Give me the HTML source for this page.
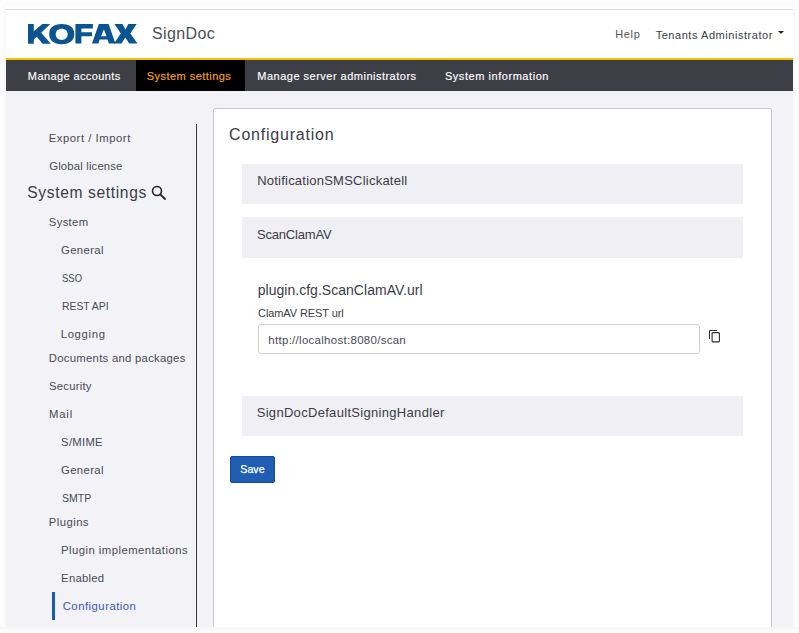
<!DOCTYPE html>
<html><head><meta charset="utf-8">
<style>
html,body{margin:0;padding:0;}
body{width:799px;height:633px;overflow:hidden;background:#fdfdfd;position:relative;font-family:"Liberation Sans",sans-serif;}
.abs{position:absolute;}
.t{position:absolute;white-space:nowrap;line-height:1;}
#app{position:absolute;left:6px;top:6px;width:787px;height:621px;background:#f2f2f7;overflow:hidden;box-shadow:0 0 6px rgba(0,0,0,0.05);}
#hdr{position:absolute;left:0;top:0;width:787px;height:52px;background:#fff;}
#hdrline{position:absolute;left:0;top:3px;width:787px;height:1px;background:#dcdce2;}
#yel{position:absolute;left:0;top:52px;width:787px;height:2px;background:#f7c100;}
#nav{position:absolute;left:0;top:54px;width:787px;height:31px;background:#3e3e47;}
#act{position:absolute;left:130px;top:0;width:109px;height:31px;background:#000;}
.nv{color:#fff;font-size:12px;}
.st{-webkit-text-stroke:0.15px currentColor;}
.sb{color:#4a4a55;font-size:12px;}
#box{position:absolute;left:207px;top:102px;width:557px;height:600px;background:#fff;border:1px solid #c8c8cc;border-radius:2px;}
.pn{position:absolute;left:235px;width:501px;background:#efeff4;}
.pt{color:#3c3c46;font-size:13px;}
</style></head><body>
<div id="app">
  <div id="hdr">
    <div id="hdrline"></div>
  </div>
  <div id="yel"></div>
  <div id="nav">
    <div id="act"></div>
  </div>
</div>
<!-- header texts (page coords) -->
<svg class="abs" style="left:0;top:0;" width="160" height="60" viewBox="0 0 160 60"><g fill="#0a5591" fill-rule="evenodd">
<path d="M28,24H33.8V31.2L42.3,24H50.2L41.2,32.8L50.8,43.8H42.5L36.9,36.7L33.8,39.2V43.8H28Z"/>
<path d="M61.75,24.00C69.78,24.00 74.30,27.64 74.30,34.10C74.30,40.56 69.78,44.20 61.75,44.20C53.72,44.20 49.20,40.56 49.20,34.10C49.20,27.64 53.72,24.00 61.75,24.00ZM61.70,28.70C65.30,28.70 67.70,30.96 67.70,34.35C67.70,37.74 65.30,40.00 61.70,40.00C58.10,40.00 55.70,37.74 55.70,34.35C55.70,30.96 58.10,28.70 61.70,28.70Z"/>
<path d="M75.4,24H92.9V28.5H81.4V32.3H92V36.2H81.4V43.6H75.4Z"/>
<path d="M92,43.6L98.8,24H108.6L115.4,43.6H108.8L107.6,39.6H99.6L98.4,43.6ZM101,36.2L103.9,29.6L106.6,36.2Z"/>
<path d="M114.5,24H122.4L125.4,29.4L128.3,24H136.7L130.3,33.6L137.5,43.6H129.2L125.3,37.6L121.5,43.6H114L120.8,33.6Z"/>
</g></svg>
<div class="t" style="left: 152.11px; top: 26px; font-size: 16px; letter-spacing: 0.34px; color: rgb(78, 78, 88);">SignDoc</div>
<div class="t" style="left: 615.2px; top: 29px; font-size: 11px; color: rgb(85, 85, 85); letter-spacing: 0.68px;">Help</div>
<div class="t" style="left: 655.64px; top: 30px; font-size: 11px; letter-spacing: 0.55px; color: rgb(60, 60, 70);">Tenants Administrator</div>
<div class="abs" style="left:778px;top:31px;width:0;height:0;border-left:3.5px solid transparent;border-right:3.5px solid transparent;border-top:3.5px solid #222;"></div>

<div class="t st" style="left: 27.83px; top: 70.69px; font-size: 11px; letter-spacing: 0.40px; color: rgb(255, 255, 255);">Manage accounts</div>
<div class="t st" style="left: 146.78px; top: 70.69px; font-size: 11px; letter-spacing: 0.46px; color: rgb(245, 163, 26);">System settings</div>
<div class="t st" style="left: 257.30px; top: 70.69px; font-size: 11px; letter-spacing: 0.49px; color: rgb(255, 255, 255);">Manage server administrators</div>
<div class="t st" style="left: 444.93px; top: 70.69px; font-size: 11px; letter-spacing: 0.55px; color: rgb(255, 255, 255);">System information</div>

<!-- sidebar -->
<div class="t" style="left: 48.68px; top: 133px; font-size: 11.3px; letter-spacing: 0.54px; color: rgb(74, 74, 85);">Export / Import</div>
<div class="t" style="left: 49.24px; top: 161px; font-size: 11.3px; letter-spacing: 0.17px; color: rgb(74, 74, 85);">Global license</div>
<div class="t" style="left: 27.27px; top: 185px; font-size: 15.6px; letter-spacing: 0.64px; color: rgb(60, 60, 70);">System settings</div>
<svg class="abs" style="left:148px;top:182px;" width="22" height="22" viewBox="0 0 22 22"><circle cx="9" cy="9" r="4.5" fill="none" stroke="#222" stroke-width="1.6"/><line x1="12.3" y1="12.3" x2="17" y2="17" stroke="#222" stroke-width="1.8" stroke-linecap="round"/></svg>
<div class="t" style="left: 48.84px; top: 217px; font-size: 11.3px; letter-spacing: 0.32px; color: rgb(74, 74, 85);">System</div>
<div class="t" style="left: 60.97px; top: 245px; font-size: 11.3px; letter-spacing: 0.39px; color: rgb(74, 74, 85);">General</div>
<div class="t" style="left: 61.5px; top: 273px; font-size: 11.3px; letter-spacing: 0px; color: rgb(74, 74, 85); transform-origin: 0px 0px; transform: scaleX(0.84);">SSO</div>
<div class="t" style="left: 61.7px; top: 301px; font-size: 11.3px; letter-spacing: 0px; color: rgb(74, 74, 85); transform-origin: 0px 0px; transform: scaleX(0.92);">REST API</div>
<div class="t" style="left: 60.68px; top: 329px; font-size: 11.3px; letter-spacing: 0.69px; color: rgb(74, 74, 85);">Logging</div>
<div class="t" style="left: 48.83px; top: 353px; font-size: 11.3px; letter-spacing: 0.28px; color: rgb(74, 74, 85);">Documents and packages</div>
<div class="t" style="left: 49.12px; top: 381px; font-size: 11.3px; letter-spacing: 0.22px; color: rgb(74, 74, 85);">Security</div>
<div class="t" style="left: 49.11px; top: 409px; font-size: 11.3px; letter-spacing: 0.78px; color: rgb(74, 74, 85);">Mail</div>
<div class="t" style="left: 61.12px; top: 437px; font-size: 11.3px; letter-spacing: 0.27px; color: rgb(74, 74, 85);">S/MIME</div>
<div class="t" style="left: 60.97px; top: 465px; font-size: 11.3px; letter-spacing: 0.39px; color: rgb(74, 74, 85);">General</div>
<div class="t" style="left: 61.7px; top: 493px; font-size: 11.3px; letter-spacing: 0px; color: rgb(74, 74, 85); transform-origin: 0px 0px; transform: scaleX(0.93);">SMTP</div>
<div class="t" style="left: 48.87px; top: 517px; font-size: 11.3px; letter-spacing: 0.43px; color: rgb(74, 74, 85);">Plugins</div>
<div class="t" style="left: 61.11px; top: 545px; font-size: 11.3px; letter-spacing: 0.46px; color: rgb(74, 74, 85);">Plugin implementations</div>
<div class="t" style="left: 61.11px; top: 573px; font-size: 11.3px; letter-spacing: 0.26px; color: rgb(74, 74, 85);">Enabled</div>
<div class="abs" style="left:52px;top:592px;width:3px;height:28px;background:#1a5cb0;"></div>
<div class="t" style="left: 62.70px; top: 601px; font-size: 11.3px; letter-spacing: 0.50px; color: rgb(58, 90, 184);">Configuration</div>
<div class="abs" style="left:196px;top:124px;width:1px;height:503px;background:#3a3a44;"></div>

<!-- content -->
<div class="abs" style="left:213px;top:108px;width:557px;height:560px;background:#fff;border:1px solid #c8c8cc;border-radius:2px;"></div>
<div class="t" style="left: 229.09px; top: 127px; font-size: 16px; letter-spacing: 0.78px; color: rgb(60, 60, 70);">Configuration</div>
<div class="pn" style="left:242px;top:164px;height:40px;"></div>
<div class="t" style="left: 257.15px; top: 174.4px; font-size: 13px; letter-spacing: 0.23px; color: rgb(60, 60, 70);">NotificationSMSClickatell</div>
<div class="pn" style="left:242px;top:217px;height:41px;"></div>
<div class="t" style="left: 256.93px; top: 228.2px; font-size: 13px; letter-spacing: -0.17px; color: rgb(60, 60, 70);">ScanClamAV</div>
<div class="t" style="left: 257.68px; top: 282.95px; font-size: 14px; color: rgb(60, 60, 70); letter-spacing: 0.03px;">plugin.cfg.ScanClamAV.url</div>
<div class="t" style="left: 258.07px; top: 307.79px; font-size: 11px; letter-spacing: -0.09px; color: rgb(60, 60, 70);">ClamAV REST url</div>
<div class="abs" style="left:258px;top:324px;width:440px;height:28px;border:1px solid #ccd0d8;border-radius:3px;background:#fff;"></div>
<div class="t" style="left: 268.35px; top: 335px; font-size: 11.5px; letter-spacing: 0.28px; color: rgb(74, 74, 85);">http://localhost:8080/scan</div>
<svg class="abs" style="left:706px;top:327px;" width="18" height="18" viewBox="0 0 18 18"><path d="M3.5 12V3.5H11" fill="none" stroke="#2a2a30" stroke-width="1"/><rect x="6.1" y="5.6" width="7.3" height="9.3" rx="1" fill="none" stroke="#2a2a30" stroke-width="1.1"/></svg>
<div class="pn" style="left:242px;top:396px;height:40px;"></div>
<div class="t" style="left: 256.66px; top: 406px; font-size: 13px; letter-spacing: 0.31px; color: rgb(60, 60, 70);">SignDocDefaultSigningHandler</div>
<div class="abs" style="left:230px;top:456px;width:43px;height:25px;background:#1f5eb3;border:1px solid #154c96;border-radius:2px;"></div>
<div class="t st" style="left: 240.3px; top: 464px; font-size: 10.6px; letter-spacing: 0.05px; color: rgb(255, 255, 255); -webkit-text-stroke: 0.25px rgb(255, 255, 255);">Save</div>
<div class="abs" style="left:0;top:627px;width:799px;height:6px;background:linear-gradient(#f6f6f6,#fdfdfd);"></div>
</body></html>
